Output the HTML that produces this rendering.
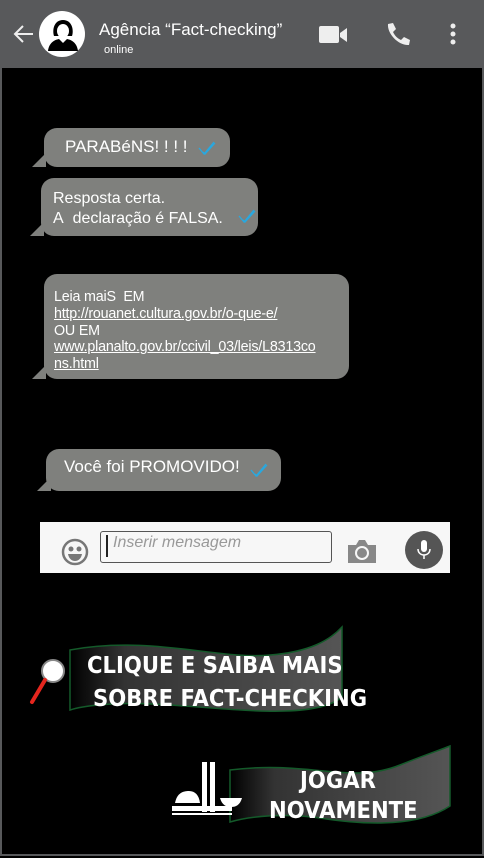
<!DOCTYPE html>
<html><head><meta charset="utf-8"><style>
body{margin:0;width:484px;height:858px;background:#000;position:relative;overflow:hidden;font-family:"Liberation Sans",sans-serif;}
.frame{position:absolute;left:0;top:0;width:480px;height:854px;border:2px solid #58595b;border-top:0;}
.hdr{position:absolute;left:0;top:0;width:484px;height:68px;background:#58595b;}
.b{position:absolute;background:#7f807d;border-radius:13px;color:#fff;font-size:16px;}
.tail{position:absolute;width:0;height:0;border-top:14px solid transparent;border-right:14px solid #7f807d;}
.chk{position:absolute;}
.ban{font-family:"DejaVu Sans",sans-serif;font-weight:bold;color:#fff;position:absolute;letter-spacing:0px;transform:scaleX(0.92);transform-origin:left;}
u{text-decoration:underline}
</style></head><body>
<div class="hdr">
<svg style="position:absolute;left:12px;top:24px" width="22" height="20"><path d="M21 10H3M11 2L3 10l8 8" stroke="#eee" stroke-width="2" fill="none"/></svg>
<div style="position:absolute;left:39px;top:11px;width:46px;height:46px;border-radius:50%;background:#fff"></div>
<svg style="position:absolute;left:46px;top:14px" width="34" height="38"><path d="M8 22c-2-6 0-16 9-16s11 10 9 16z" fill="#000"/><ellipse cx="17" cy="17" rx="6" ry="7" fill="#fff"/><path d="M2 37c1-8 6-11 11-12l4 4 4-4c5 1 10 4 11 12z" fill="#000"/></svg>
<div style="position:absolute;left:99px;top:20px;color:#fff;font-size:17px">Agência “Fact-checking”</div>
<div style="position:absolute;left:104px;top:44px;color:#fff;font-size:11px">online</div>
<svg style="position:absolute;left:319px;top:25px" width="30" height="20"><rect x="0" y="1" width="20" height="17" rx="2" fill="#eee"/><path d="M21 8l7-5v14l-7-5z" fill="#eee"/></svg>
<svg style="position:absolute;left:385px;top:22px" width="26" height="26"><path d="M3 2l5-1 3 6-3 3c2 4 4 6 8 8l3-3 6 3-1 5c-10 1-22-11-21-21z" fill="#eee"/></svg>
<svg style="position:absolute;left:448px;top:22px" width="10" height="24"><circle cx="5" cy="4" r="2.5" fill="#eee"/><circle cx="5" cy="12" r="2.5" fill="#eee"/><circle cx="5" cy="20" r="2.5" fill="#eee"/></svg>
</div>
<div class="frame"></div>

<div class="tail" style="left:32px;top:153px"></div>
<div class="b" style="left:44px;top:128px;width:186px;height:39px"><span style="position:absolute;left:21px;top:9px;font-size:17px">PARABéNS! ! ! !</span></div>
<svg class="chk" style="left:198px;top:140px" width="18" height="16"><path d="M1 8l5 6L16 2M5 12l2 2L17 3" stroke="#29a8df" stroke-width="1.3" fill="none"/></svg>

<div class="tail" style="left:30px;top:222px"></div>
<div class="b" style="left:41px;top:178px;width:217px;height:58px"><div style="position:absolute;left:12px;top:11px;line-height:20px">Resposta certa.<br>A&nbsp; declaração é FALSA.</div></div>
<svg class="chk" style="left:238px;top:208px" width="18" height="16"><path d="M1 8l5 6L16 2M5 12l2 2L17 3" stroke="#29a8df" stroke-width="1.3" fill="none"/></svg>

<div class="tail" style="left:32px;top:365px"></div>
<div class="b" style="left:44px;top:274px;width:305px;height:105px;font-size:14.3px"><div style="position:absolute;left:10px;top:15px;line-height:16.8px;letter-spacing:-0.2px">Leia maiS&nbsp; EM<br><u>http://rouanet.cultura.gov.br/o-que-e/</u><br>OU EM<br><u>www.planalto.gov.br/ccivil_03/leis/L8313co</u><br><u>ns.html</u></div></div>

<div class="tail" style="left:37px;top:477px"></div>
<div class="b" style="left:46px;top:449px;width:235px;height:42px"><span style="position:absolute;left:18px;top:8px;font-size:17px">Você foi PROMOVIDO!</span></div>
<svg class="chk" style="left:250px;top:462px" width="18" height="16"><path d="M1 8l5 6L16 2M5 12l2 2L17 3" stroke="#29a8df" stroke-width="1.3" fill="none"/></svg>

<div style="position:absolute;left:40px;top:522px;width:410px;height:51px;background:#f7f7f7"></div>
<svg style="position:absolute;left:60px;top:537px" width="30" height="30"><circle cx="15" cy="15" r="12" fill="none" stroke="#777" stroke-width="2.5"/><circle cx="11" cy="12" r="2.5" fill="#777"/><circle cx="19" cy="12" r="2.5" fill="#777"/><path d="M8 17h14c-1 5-4 7-7 7s-6-2-7-7z" fill="#777"/></svg>
<div style="position:absolute;left:100px;top:531px;width:230px;height:30px;border:1px solid #555;border-radius:3px;background:#f7f7f7"></div>
<div style="position:absolute;left:106px;top:535px;width:2px;height:22px;background:#222"></div>
<div style="position:absolute;left:113px;top:534px;font-size:16px;font-style:italic;color:#999">Inserir mensagem</div>
<svg style="position:absolute;left:347px;top:539px" width="30" height="24"><path d="M1 6h8l3-5h6l3 5h8v18H1z" fill="#888"/><circle cx="15" cy="14" r="6" fill="none" stroke="#f7f7f7" stroke-width="2"/></svg>
<div style="position:absolute;left:405px;top:531px;width:38px;height:38px;border-radius:50%;background:#555"></div>
<svg style="position:absolute;left:414px;top:539px" width="20" height="22"><rect x="7" y="1" width="6" height="12" rx="3" fill="#fff"/><path d="M4 10c0 4 3 6 6 6s6-2 6-6M10 16v4" stroke="#fff" stroke-width="1.5" fill="none"/></svg>

<svg style="position:absolute;left:0;top:610px" width="484" height="248">
<defs><linearGradient id="g" x1="0" x2="1"><stop offset="0" stop-color="#000"/><stop offset=".2" stop-color="#333"/><stop offset="1" stop-color="#555"/></linearGradient></defs>
<path d="M70 40c80-15 150 10 200 5 40-3 60-15 72-28v70c-30 25-120 10-190 7-40-2-70 2-82 6z" fill="url(#g)" stroke="#145a2a" stroke-width="1.5"/>
<path d="M230 160c80-10 120 15 170-5 25-10 40-15 50-19v60c-30 20-80 20-130 12-35-5-70-2-90 4z" fill="url(#g)" stroke="#145a2a" stroke-width="1.5"/>
<circle cx="53" cy="61" r="11" fill="#fff" stroke="#888" stroke-width="2"/>
<path d="M45 70L32 92" stroke="#e5261e" stroke-width="4" stroke-linecap="round"/>
<g fill="#fff"><rect x="202" y="152" width="5" height="50"/><rect x="210" y="152" width="5" height="50"/><path d="M175 193c2-10 8-12 14-12s10 4 11 12z"/><path d="M220 188h22c-2 7-6 9-11 9s-9-2-11-9z"/><rect x="172" y="196" width="60" height="5"/><rect x="172" y="203" width="60" height="2"/></g>
</svg>
<div class="ban" style="left:87px;top:653px;font-size:23px">CLIQUE E SAIBA MAIS</div>
<div class="ban" style="left:93px;top:686px;font-size:23px">SOBRE FACT-CHECKING</div>
<div class="ban" style="left:300px;top:768px;font-size:23px">JOGAR</div>
<div class="ban" style="left:269px;top:798px;font-size:23px">NOVAMENTE</div>
</body></html>
